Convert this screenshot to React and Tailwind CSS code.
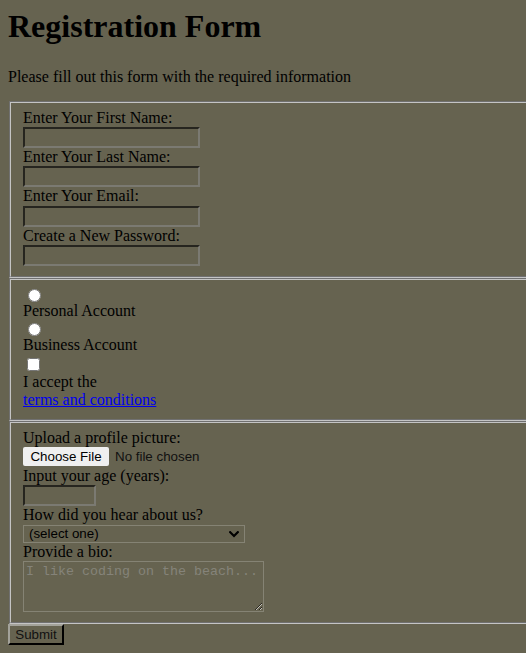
import React from "react";

const inputCls =
  "block h-[21px] bg-transparent border-2 border-t-[#26251f] border-l-[#26251f] border-b-[#7b7a72] border-r-[#7b7a72] px-[2px] font-['Liberation_Sans',Arial,sans-serif] text-[13.33px] outline-none";

const fieldsetCls =
  "ml-[1px] w-[620px] border-2 [--tw-border-style:groove] [border-style:groove] border-[#c4c4c4] px-3 pt-[5.6px] pb-[10px]";

const lineCls = "block h-[18.4px] leading-[18.4px]";

export default function App() {
  return (
    <div className="h-[653px] w-full overflow-hidden bg-[#666350] px-2 pt-[8px] font-['Liberation_Serif','Times_New_Roman',serif] text-[16px] leading-[normal] text-black">
      <h1 className="m-0 mb-[23px] text-[32px] font-bold leading-[normal]">Registration Form</h1>
      <p className="m-0 mb-[15px]">Please fill out this form with the required information</p>
      <form>
        <fieldset className={fieldsetCls}>
          <label className={lineCls}>Enter Your First Name:</label>
          <input type="text" className={inputCls + " w-[177px]"} />
          <label className={lineCls}>Enter Your Last Name:</label>
          <input type="text" className={inputCls + " w-[177px]"} />
          <label className={lineCls}>Enter Your Email:</label>
          <input type="email" className={inputCls + " w-[177px]"} />
          <label className={lineCls}>Create a New Password:</label>
          <input type="password" className={inputCls + " w-[177px]"} />
        </fieldset>

        <fieldset className={fieldsetCls}>
          <div className="flex h-[16px] items-start overflow-visible">
            <input type="radio" name="acct" className="m-0 ml-[5px] mt-[3px] h-[13px] w-[13px] shrink-0" />
          </div>
          <label className={lineCls}>Personal Account</label>
          <div className="flex h-[16px] items-start overflow-visible">
            <input type="radio" name="acct" className="m-0 ml-[5px] mt-[3px] h-[13px] w-[13px] shrink-0" />
          </div>
          <label className={lineCls}>Business Account</label>
          <div className="flex h-[18px] items-start overflow-visible">
            <input type="checkbox" className="m-0 ml-[4px] mt-[3px] h-[13px] w-[13px] shrink-0" />
          </div>
          <label className={lineCls}>I accept the</label>
          <a href="#" className={lineCls + " w-max text-[#0000ee] underline"}>terms and conditions</a>
        </fieldset>

        <fieldset className={fieldsetCls}>
          <label className={lineCls}>Upload a profile picture:</label>
          <div className="flex h-[19.6px] items-start font-['Liberation_Sans',Arial,sans-serif] text-[13.33px]">
            <button type="button" className="h-[19px] w-[86px] rounded-[2px] bg-[#efefef] text-center text-[13.33px] leading-[19px] text-black">
              Choose File
            </button>
            <span className="ml-[6px] leading-[19px] text-[#111]">No file chosen</span>
          </div>
          <label className={lineCls}>Input your age (years):</label>
          <input type="number" className={inputCls + " w-[73px]"} />
          <label className={lineCls}>How did you hear about us?</label>
          <div className="relative h-[18.4px] w-[222px]">
            <select className="block h-[18.4px] w-[222px] appearance-none border border-[#858374] bg-transparent pl-[5px] font-['Liberation_Sans',Arial,sans-serif] text-[13.33px] leading-[16px] text-black outline-none">
              <option>(select one)</option>
              <option>Friend</option>
              <option>Search engine</option>
            </select>
            <svg
              className="pointer-events-none absolute right-[6px] top-[6px]"
              width="10"
              height="7"
              viewBox="0 0 10 7"
              fill="none"
            >
              <path d="M1.2 1.2 L5 5 L8.8 1.2" stroke="#000" strokeWidth="2.2" strokeLinecap="square" />
            </svg>
          </div>
          <label className={lineCls}>Provide a bio:</label>
          <textarea
            placeholder="I like coding on the beach..."
            className="block h-[51px] w-[241px] border border-[#858374] bg-transparent p-[2px] font-['Liberation_Mono','Courier_New',monospace] text-[13.33px] leading-[normal] outline-none placeholder:text-[#85837a]"
          />
        </fieldset>

        <button
          type="submit"
          className="block h-[21px] w-[56px] border-2 border-t-[#a3a29a] border-l-[#a3a29a] border-b-black border-r-black bg-transparent font-['Liberation_Sans',Arial,sans-serif] text-[13.33px] leading-[16px] text-[#111]"
        >
          Submit
        </button>
      </form>
    </div>
  );
}
